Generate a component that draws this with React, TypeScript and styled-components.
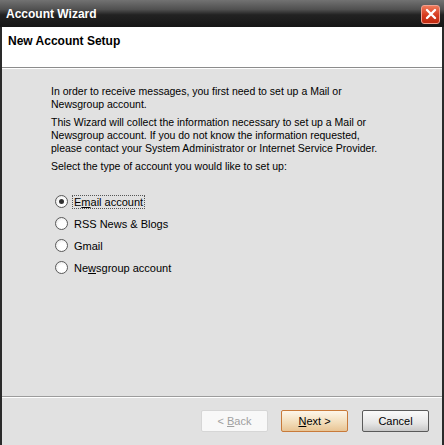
import styled, { createGlobalStyle } from "styled-components";

const GlobalStyle = createGlobalStyle`
  html, body {
    margin: 0;
    padding: 0;
    background: #e1e1e1;
  }
  body {
    font-family: "Liberation Sans", Arial, sans-serif;
  }
`;

const options = [
  { id: "email", label: "Email account", key: 1, checked: true },
  { id: "rss", label: "RSS News & Blogs", key: -1, checked: false },
  { id: "gmail", label: "Gmail", key: -1, checked: false },
  { id: "news", label: "Newsgroup account", key: 2, checked: false },
];

// underline the access key letter
function Label({ text, at }: { text: string; at: number }) {
  if (at < 0) return <>{text}</>;
  return (
    <>
      {text.slice(0, at)}
      <u>{text[at]}</u>
      {text.slice(at + 1)}
    </>
  );
}

export default function App() {
  return (
    <>
      <GlobalStyle />
      <Window>
        <TitleBar>
          <TitleText>Account Wizard</TitleText>
          <CloseButton aria-label="Close">
            <svg width="12" height="12" viewBox="0 0 12 12">
              <path
                d="M2 2 L10 10 M10 2 L2 10"
                stroke="#fff"
                strokeWidth="2.4"
                strokeLinecap="round"
              />
            </svg>
          </CloseButton>
        </TitleBar>
        <Header>
          <HeaderTitle>New Account Setup</HeaderTitle>
        </Header>
        <Body>
          <Paragraph>
            In order to receive messages, you first need to set up a Mail or
            <br />
            Newsgroup account.
          </Paragraph>
          <Paragraph>
            This Wizard will collect the information necessary to set up a Mail or
            <br />
            Newsgroup account. If you do not know the information requested,
            <br />
            please contact your System Administrator or Internet Service Provider.
          </Paragraph>
          <Paragraph>Select the type of account you would like to set up:</Paragraph>
          <OptionList>
            {options.map((o) => (
              <Option key={o.id}>
                <Radio $checked={o.checked} />
                <OptionText $focused={o.checked}>
                  <Label text={o.label} at={o.key} />
                </OptionText>
              </Option>
            ))}
          </OptionList>
        </Body>
        <Footer>
          <Button $variant="disabled">
            {"< "}
            <u>B</u>ack
          </Button>
          <Button $variant="default">
            <u>N</u>ext{" >"}
          </Button>
          <CancelSlot>
            <Button $variant="normal">Cancel</Button>
          </CancelSlot>
        </Footer>
      </Window>
    </>
  );
}

const Window = styled.div`
  width: 444px;
  height: 445px;
  box-sizing: border-box;
  display: flex;
  flex-direction: column;
  background: #e1e1e1;
  border-left: 2px solid #2a2a2a;
  border-right: 2px solid #2a2a2a;
`;

const TitleBar = styled.div`
  height: 27px;
  flex: none;
  display: flex;
  align-items: center;
  justify-content: space-between;
  padding: 0 4px 0 4px;
  margin: 0 -2px;
  background: linear-gradient(#727272 0%, #505050 35%, #222 55%, #161616 100%);
`;

const TitleText = styled.div`
  color: #fff;
  font-weight: bold;
  font-size: 12px;
  padding-left: 2px;
`;

const CloseButton = styled.div`
  width: 19px;
  height: 19px;
  box-sizing: border-box;
  border-radius: 3px;
  border: 1px solid #f0a090;
  background: linear-gradient(#f07a5a, #d63a1e 55%, #c02a10);
  display: flex;
  align-items: center;
  justify-content: center;
  margin-top: 1px;
`;

const Header = styled.div`
  height: 41px;
  flex: none;
  background: #fff;
  border-bottom: 1px solid #8c8c8c;
  box-shadow: 0 1px 0 #fff;
  padding: 7px 0 0 6px;
  box-sizing: border-box;
`;

const HeaderTitle = styled.div`
  font-weight: bold;
  font-size: 12px;
  color: #000;
`;

const Body = styled.div`
  flex: 1;
  padding: 17px 0 0 49px;
  font-size: 10.5px;
  color: #000;
  border-bottom: 1px solid #9c9c9c;
  box-shadow: 0 1px 0 #fff;
`;

const Paragraph = styled.p`
  margin: 0 0 5px;
  line-height: 13px;
`;

const OptionList = styled.div`
  display: flex;
  flex-direction: column;
  gap: 9px;
  margin-top: 22px;
  padding-left: 4px;
`;

const Option = styled.div`
  display: flex;
  align-items: center;
  gap: 5px;
  height: 13px;
`;

const Radio = styled.span<{ $checked: boolean }>`
  width: 13px;
  height: 13px;
  box-sizing: border-box;
  border-radius: 50%;
  border: 1px solid #5a5a5a;
  background: radial-gradient(circle at 60% 60%, #ffffff 40%, #dcdcdc 100%);
  display: flex;
  align-items: center;
  justify-content: center;
  &::after {
    content: "";
    width: 5px;
    height: 5px;
    border-radius: 50%;
    background: ${(p) => (p.$checked ? "#333" : "transparent")};
  }
`;

const OptionText = styled.span<{ $focused: boolean }>`
  font-size: 11px;
  padding: 0 1px;
  outline: ${(p) => (p.$focused ? "1px dotted #555" : "none")};
`;

const Footer = styled.div`
  height: 48px;
  flex: none;
  display: flex;
  align-items: flex-start;
  padding: 13px 0 0 199px;
  box-sizing: border-box;
  gap: 13px;
`;

const CancelSlot = styled.div`
  margin-left: 1px;
`;

const Button = styled.div<{ $variant: "disabled" | "default" | "normal" }>`
  width: 67px;
  height: 22px;
  flex: none;
  box-sizing: border-box;
  display: flex;
  align-items: center;
  justify-content: center;
  white-space: pre;
  font-size: 11px;
  border-radius: 2px;
  color: ${(p) => (p.$variant === "disabled" ? "#a0a0a0" : "#000")};
  border: 1px solid
    ${(p) =>
      p.$variant === "disabled"
        ? "#d6d6d6"
        : p.$variant === "default"
        ? "#c87a3a"
        : "#5a5a5a"};
  background: ${(p) =>
    p.$variant === "disabled"
      ? "#f8f8f8"
      : p.$variant === "default"
      ? "linear-gradient(#fdf6ea, #f2dcb8 60%, #e8c494)"
      : "linear-gradient(#fafafa, #e6e6e6 60%, #c8c8c8)"};
`;
